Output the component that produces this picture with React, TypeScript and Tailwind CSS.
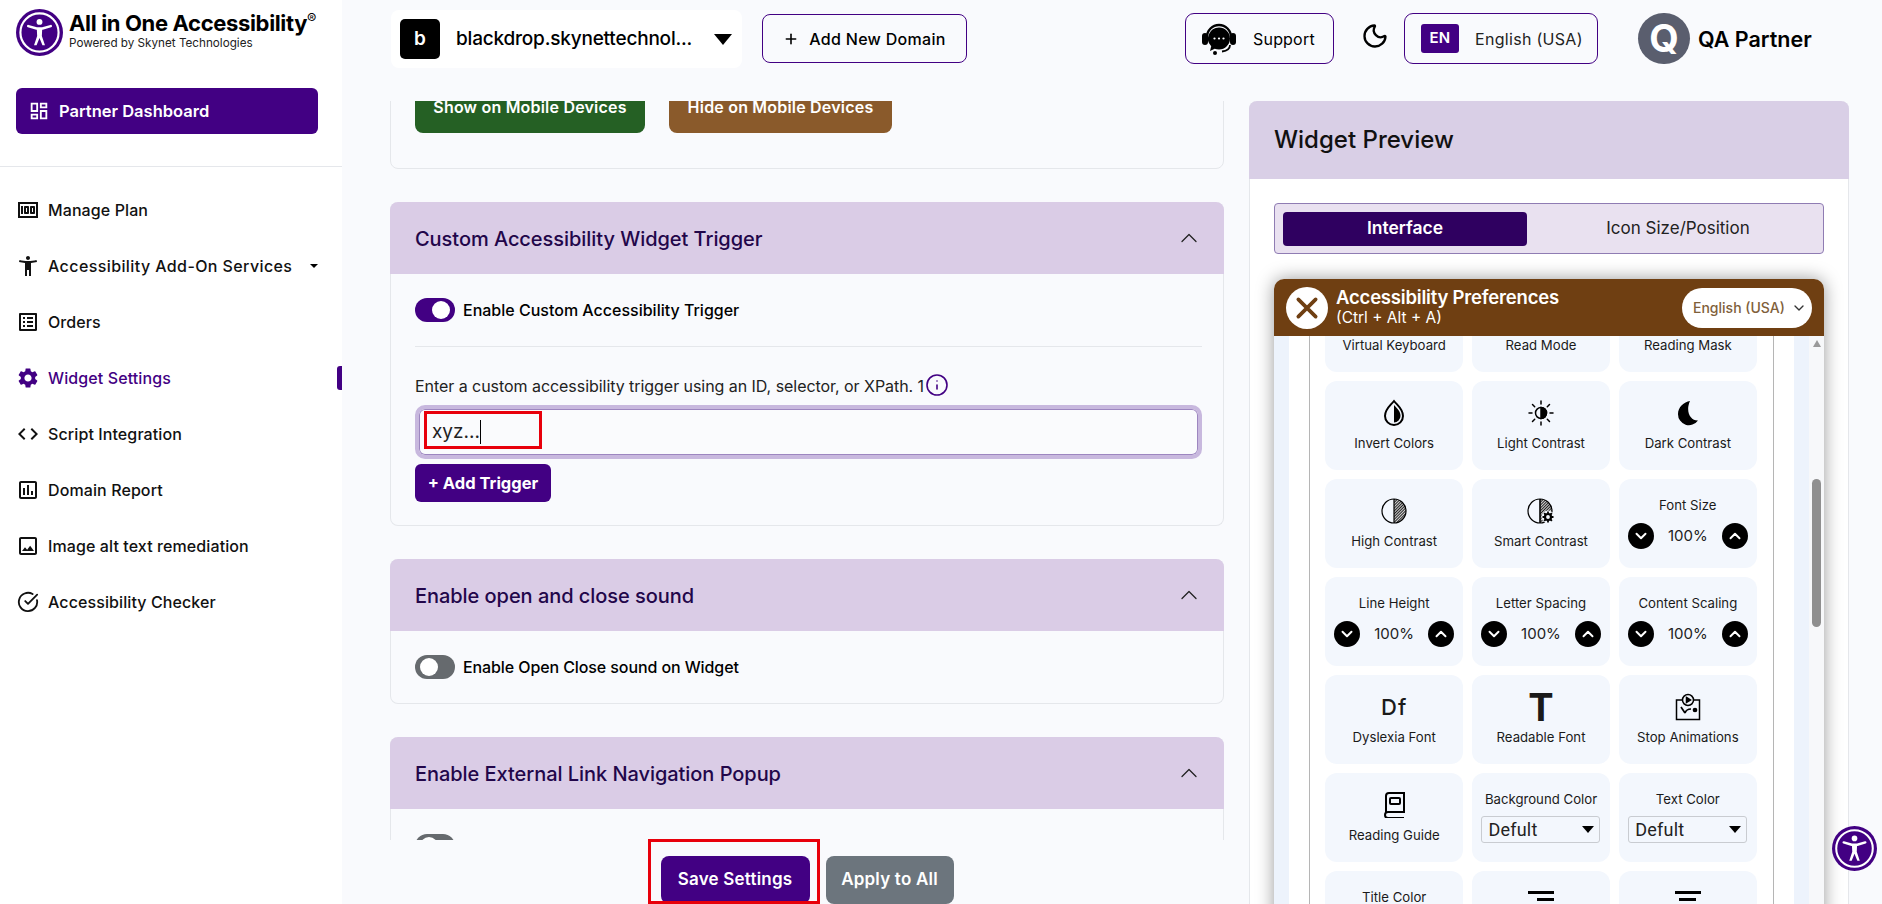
import type { ReactNode } from 'react';
import { ChevronDown, ChevronUp, Info, Moon, Plus } from 'lucide-react';
import {
  MdAccessibilityNew,
  MdCode,
  MdOutlineAssessment,
  MdOutlineDashboard,
  MdOutlineImage,
  MdOutlineListAlt,
  MdOutlineMoney,
  MdSettings,
} from 'react-icons/md';
import { LuCircleCheckBig } from 'react-icons/lu';

const navItems = [
  { label: 'Manage Plan', icon: <MdOutlineMoney className="h-6 w-6" /> },
  { label: 'Accessibility Add-On Services', icon: <MdAccessibilityNew className="h-6 w-6" />, caret: true },
  { label: 'Orders', icon: <MdOutlineListAlt className="h-6 w-6" /> },
  { label: 'Widget Settings', icon: <MdSettings className="h-6 w-6" />, active: true },
  { label: 'Script Integration', icon: <MdCode className="h-6 w-6" /> },
  { label: 'Domain Report', icon: <MdOutlineAssessment className="h-6 w-6" /> },
  { label: 'Image alt text remediation', icon: <MdOutlineImage className="h-6 w-6" /> },
  { label: 'Accessibility Checker', icon: <LuCircleCheckBig className="h-[22px] w-[22px]" /> },
];

function AccessLogo({ className }: { className: string }) {
  return (
    <svg viewBox="0 0 48 48" className={className}>
      <circle cx="24" cy="24" r="24" fill="#420083" />
      <circle cx="24" cy="24" r="19.5" fill="#420083" stroke="#fff" strokeWidth="2.2" />
      <circle cx="24" cy="13.2" r="3" fill="#fff" />
      <path d="M12.5 17.5 L21 20 H27 L35.5 17.5" fill="none" stroke="#fff" strokeWidth="2.6" strokeLinecap="round" strokeLinejoin="round" />
      <path d="M21.2 19.5 H26.8 L26.4 27.5 L29.6 37 H27 L24 29.5 L21 37 H18.4 L21.6 27.5 Z" fill="#fff" />
    </svg>
  );
}

function SupportIcon() {
  return (
    <svg viewBox="0 0 36 36" className="h-9 w-9">
      <path d="M6 16a12 12 0 0 1 24 0" fill="none" stroke="#000" strokeWidth="2.4" />
      <rect x="1" y="12" width="6" height="12" rx="3" fill="#000" />
      <rect x="29" y="12" width="6" height="12" rx="3" fill="#000" />
      <path d="M18 6.5a11 11 0 0 1 0 22c-1.5 0-3-.3-4.300-.8L9 30l1.200-4.800A11 11 0 0 1 18 6.500Z" fill="#000" />
      <circle cx="13.500" cy="17.500" r="1.100" fill="#fff" />
      <circle cx="18" cy="17.500" r="1.100" fill="#fff" />
      <circle cx="22.500" cy="17.500" r="1.100" fill="#fff" />
      <path d="M29 24c0 4-4 6-8 6.500" fill="none" stroke="#000" strokeWidth="1.800" />
      <circle cx="14" cy="32" r="2" fill="#000" />
    </svg>
  );
}

function InvertIcon() {
  return (
    <svg viewBox="0 0 26 28" className="h-7 w-[26px]">
      <path d="M13 2C9 7 4 10 4 17a9 9 0 0 0 18 0C22 10 17 7 13 2Z" fill="none" stroke="#000" strokeWidth="2" />
      <path d="M13 6C16 9.500 19.500 12 19.500 17A6.500 6.500 0 0 1 13 23.500Z" fill="#000" />
    </svg>
  );
}

function LightContrastIcon() {
  return (
    <svg viewBox="0 0 26 26" className="h-[26px] w-[26px]" stroke="#000" strokeWidth="1.500" strokeLinecap="round">
      <circle cx="13" cy="13" r="5.500" fill="none" />
      <path d="M13 7.500a5.500 5.500 0 0 1 0 11Z" fill="#000" />
      <path d="M13 1v3M13 22v3M1 13h3M22 13h3M4.500 4.500l2.200 2.200M19.300 19.300l2.200 2.200M4.500 21.500l2.200-2.200M19.300 6.700l2.200-2.200" />
    </svg>
  );
}

function DarkContrastIcon() {
  return (
    <svg viewBox="0 0 26 28" className="h-7 w-[26px]">
      <path d="M15 2C9 3 3 8 3 15a11 11 0 0 0 20 6.500C16 22 10 13 15 2Z" fill="#000" />
    </svg>
  );
}

function HatchDefs({ id }: { id: string }) {
  return (
    <defs>
      <pattern id={id} width="2" height="2" patternUnits="userSpaceOnUse" patternTransform="rotate(45)">
        <rect width="2" height="2" fill="#fff" />
        <rect width="1.200" height="2" fill="#222" />
      </pattern>
    </defs>
  );
}

function HighContrastIcon() {
  return (
    <svg viewBox="0 0 26 26" className="h-[26px] w-[26px]">
      <HatchDefs id="hatch-a" />
      <path d="M13 1a12 12 0 0 1 0 24Z" fill="url(#hatch-a)" />
      <circle cx="13" cy="13" r="12" fill="none" stroke="#000" strokeWidth="1.200" />
      <path d="M13 1v24" stroke="#000" strokeWidth="1.200" />
    </svg>
  );
}

function SmartContrastIcon() {
  return (
    <svg viewBox="0 0 28 26" className="h-[26px] w-7">
      <HatchDefs id="hatch-b" />
      <path d="M13 1a12 12 0 0 1 0 24Z" fill="url(#hatch-b)" />
      <circle cx="13" cy="13" r="12" fill="none" stroke="#000" strokeWidth="1.200" />
      <path d="M13 1v24" stroke="#000" strokeWidth="1.600" />
      <circle cx="21" cy="19" r="6.500" fill="#f3f7fd" />
      <circle cx="21" cy="19" r="3" fill="none" stroke="#000" strokeWidth="2.200" />
      <path d="M21 13.500v2M21 22.500v2M15.500 19h2M24.500 19h2M17.100 15.100l1.400 1.400M23.500 21.500l1.400 1.400M17.100 22.900l1.400-1.400M23.500 16.500l1.400-1.400" stroke="#000" strokeWidth="1.800" />
    </svg>
  );
}

function StopAnimationsIcon() {
  return (
    <svg viewBox="0 0 26 28" className="h-7 w-[26px]" fill="none" stroke="#000" strokeWidth="1.500">
      <path d="M8 7H1.500v19.500h23V7H18" />
      <circle cx="13" cy="7" r="5.500" fill="#f3f7fd" />
      <path d="M11.500 4.500l4 2.500-4 2.500Z" fill="#000" />
      <path d="M6 14l4 6M10 20c1-3 3-4 6-4" strokeWidth="1.700" />
      <circle cx="20" cy="17" r="1.600" fill="#000" />
    </svg>
  );
}

function ReadingGuideIcon() {
  return (
    <svg viewBox="0 0 24 26" className="h-[26px] w-6" fill="none" stroke="#000" strokeWidth="2">
      <path d="M4 21V4a3 3 0 0 1 3-3h15v19H6a3 3 0 0 0 0 6h16" />
      <rect x="8" y="6" width="10" height="6" rx="1" />
    </svg>
  );
}

function Toggle({ on }: { on?: boolean }) {
  return (
    <span className={`flex h-6 w-10 shrink-0 items-center rounded-full px-[5px] ${on ? 'justify-end bg-[#420083]' : 'justify-start bg-[#666a6e]'}`}>
      <span className="h-[18px] w-[18px] rounded-full bg-white" />
    </span>
  );
}

function SectionHeader({ title }: { title: string }) {
  return (
    <div className="-mx-px flex h-[72px] shrink-0 items-center justify-between rounded-t-[8px] bg-[#dacce6] pl-[25px] pr-[21px]">
      <h2 className="mt-[2px] text-[20px] font-medium tracking-[-0.05px] text-[#22064a]">{title}</h2>
      <ChevronUp className="h-7 w-7 text-[#222]" strokeWidth={1.100} />
    </div>
  );
}

function Tile({ label, icon, height, children }: { label?: string; icon?: ReactNode; height?: string; children?: ReactNode }) {
  return (
    <div className={`flex flex-col items-center rounded-[12px] bg-[#f3f7fd] text-[13.200px] leading-[20px] text-[#1a1a1a] ${height ?? 'h-[89px]'}`}>
      {icon ? <div className="mt-[18px] flex h-7 items-center justify-center">{icon}</div> : null}
      {label ? <div className={icon ? 'mt-[6px]' : 'mt-[16px]'}>{label}</div> : null}
      {children}
    </div>
  );
}

function Stepper({ label }: { label: string }) {
  return (
    <Tile label={label}>
      <div className="mt-[8px] flex w-[120px] items-center justify-between">
        <span className="flex h-[26px] w-[26px] items-center justify-center rounded-full bg-black">
          <ChevronDown className="h-[18px] w-[18px] text-white" strokeWidth={2.600} />
        </span>
        <span className="text-[15px] text-[#222]">100%</span>
        <span className="flex h-[26px] w-[26px] items-center justify-center rounded-full bg-black">
          <ChevronUp className="h-[18px] w-[18px] text-white" strokeWidth={2.600} />
        </span>
      </div>
    </Tile>
  );
}

function ColorSelect({ label }: { label: string }) {
  return (
    <Tile label={label}>
      <div className="mt-[7px] flex h-[27px] w-[119px] items-center justify-between rounded-[3px] border border-[#c9ccd1] bg-[#f3f7fd] pl-[6px] pr-[5px] font-[family-name:'Roboto',sans-serif] text-[18px] tracking-[0.2px] text-[#222]">
        <span>Defult</span>
        <span className="h-0 w-0 border-x-[6px] border-t-[7px] border-x-transparent border-t-black" />
      </div>
    </Tile>
  );
}

function AlignBars({ center }: { center?: boolean }) {
  return (
    <div className={`flex w-[26px] flex-col gap-[4px] ${center ? 'items-center' : 'items-end'}`}>
      <span className="h-[3px] w-[26px] bg-black" />
      <span className="h-[3px] w-[17px] bg-black" />
      <span className="h-[3px] w-[26px] bg-black" />
      <span className="h-[3px] w-[17px] bg-black" />
    </div>
  );
}

export default function App() {
  return (
    <div className="flex h-screen w-screen overflow-hidden bg-[#f9fafd] font-[family-name:'Inter',sans-serif] text-black">
      <aside className="flex w-[342px] shrink-0 flex-col bg-white">
        <div className="flex items-start pl-4 pt-[9px]">
          <AccessLogo className="h-[47px] w-[47px] shrink-0" />
          <div className="ml-[6px] mt-[2px]">
            <div className="whitespace-nowrap text-[22px] font-bold leading-[25px] tracking-[-0.35px]">
              All in One Accessibility<sup className="text-[14px] font-normal">®</sup>
            </div>
            <div className="text-[11.700px] leading-[14px] text-[#222]">Powered by Skynet Technologies</div>
          </div>
        </div>
        <div className="ml-4 mt-[32px] flex h-[46px] w-[302px] items-center gap-[9px] rounded-[6px] bg-[#420083] pl-[12px] text-[16.500px] font-semibold text-white">
          <MdOutlineDashboard className="h-[22px] w-[22px]" />
          Partner Dashboard
        </div>
        <div className="mt-[32px] h-px bg-[#e5e7eb]" />
        <nav className="mt-[15px]">
          {navItems.map((item) => (
            <div
              key={item.label}
              className={`relative flex h-[56px] items-center pl-4 text-[16px] font-medium ${item.active ? 'text-[#420083]' : 'text-[#111]'} ${item.caret ? 'tracking-[0.4px]' : 'tracking-[0.1px]'}`}
            >
              <span className="flex w-6 justify-center">{item.icon}</span>
              <span className="ml-2 whitespace-nowrap">{item.label}</span>
              {item.caret ? <span className="ml-auto mr-[24px] h-0 w-0 border-x-[4px] border-t-[4px] border-x-transparent border-t-black" /> : null}
              {item.active ? <span className="absolute right-0 top-[16px] h-6 w-[5px] rounded-l-[3px] bg-[#420083]" /> : null}
            </div>
          ))}
        </nav>
      </aside>

      <div className="flex min-w-0 flex-1 flex-col">
        <header className="flex h-[101px] shrink-0 items-start pl-[49px]">
          <div className="mt-[10px] flex h-[58px] w-[351px] items-center rounded-[8px] bg-white pl-[9px]">
            <span className="flex h-10 w-10 items-center justify-center rounded-[5px] bg-black text-[19px] font-semibold text-white">b</span>
            <span className="ml-[16px] w-[254px] whitespace-nowrap text-[19px] font-medium tracking-[-0.2px]">blackdrop.skynettechnol...</span>
            <span className="ml-[4px] h-0 w-0 border-x-[9px] border-t-[11px] border-x-transparent border-t-black" />
          </div>
          <div className="ml-[20px] mt-[14px] flex h-[49px] w-[205px] items-center justify-center gap-[10px] rounded-[8px] border border-[#420083] text-[16px] font-medium tracking-[0.3px]">
            <Plus className="h-4 w-4" strokeWidth={2.400} />
            Add New Domain
          </div>
          <div className="ml-[218px] mt-[13px] flex h-[51px] w-[149px] items-center gap-[16px] rounded-[9px] border border-[#420083] pl-[15px] text-[16px] tracking-[0.2px]">
            <SupportIcon />
            Support
          </div>
          <Moon className="ml-[27px] mt-[22px] h-7 w-7" strokeWidth={2} />
          <div className="ml-[15px] mt-[13px] flex h-[51px] w-[194px] items-center gap-[16px] rounded-[9px] border border-[#420083] pl-[16px] text-[16px] tracking-[0.3px] text-[#222]">
            <span className="flex h-[29px] w-[38px] items-center justify-center rounded-[3px] bg-[#420083] text-[15px] font-semibold text-white">EN</span>
            English (USA)
          </div>
          <div className="ml-[40px] mt-[13px] flex h-[51px] w-[52px] items-center justify-center rounded-full bg-[#5a5e6e] text-[38px] font-bold text-white">Q</div>
          <div className="ml-[8px] mt-[26px] whitespace-nowrap text-[21.500px] font-semibold leading-[26px]">QA Partner</div>
        </header>

        <div className="flex min-h-0 flex-1 gap-[25px] pl-[48px] pr-[33px]">
          <main className="flex w-[834px] shrink-0 flex-col">
            <div className="flex h-[739px] shrink-0 flex-col gap-[33px] overflow-hidden">
              <section className="-mt-[40px] flex h-[108px] shrink-0 gap-[24px] rounded-b-[8px] border border-[#e5e7eb] px-[24px] pt-[19px]">
                <div className="flex h-[52px] w-[230px] items-center justify-center rounded-[8px] bg-[#256024] text-[16px] font-semibold leading-[14px] tracking-[0.2px] text-white">Show on Mobile Devices</div>
                <div className="flex h-[52px] w-[223px] items-center justify-center rounded-[8px] bg-[#8a5a2b] text-[16px] font-semibold leading-[14px] tracking-[0.2px] text-white">Hide on Mobile Devices</div>
              </section>

              <section className="flex h-[324px] shrink-0 flex-col rounded-[8px] border-x border-b border-[#e5e7eb]">
                <SectionHeader title="Custom Accessibility Widget Trigger" />
                <div className="flex flex-1 flex-col pl-[24px] pr-[21px]">
                  <div className="mt-[24px] flex items-center gap-2">
                    <Toggle on />
                    <span className="text-[16px] font-medium">Enable Custom Accessibility Trigger</span>
                  </div>
                  <div className="mt-[24px] h-px bg-[#e5e7eb]" />
                  <div className="mt-[27px] flex items-center gap-[1px] text-[16px] leading-[24px] tracking-[-0.05px] text-[#222]">
                    Enter a custom accessibility trigger using an ID, selector, or XPath. 1
                    <Info className="-mt-[3px] h-6 w-6 text-[#420083]" strokeWidth={1.600} />
                  </div>
                  <div className="relative mt-[7px] flex h-[54px] items-center rounded-[10px] border-[4px] border-[#c8b8de] bg-[#fafbfd] pl-[13px] shadow-[inset_0_0_0_1px_#9d86c0]">
                    <div className="flex h-[40px] items-center rounded-[6px] text-[19px] text-[#222]">
                      xyz...
                      <span className="h-[24px] w-px bg-black" />
                    </div>
                    <span className="absolute left-[5px] top-[2px] h-[38px] w-[118px] border-[3px] border-[#e8000b]" />
                  </div>
                  <div className="mt-[5px] flex h-[38px] w-[136px] items-center justify-center rounded-[6px] bg-[#420083] text-[16.500px] font-bold text-white">+ Add Trigger</div>
                </div>
              </section>

              <section className="flex h-[145px] shrink-0 flex-col rounded-[8px] border-x border-b border-[#e5e7eb]">
                <SectionHeader title="Enable open and close sound" />
                <div className="mt-[24px] flex items-center gap-2 px-[24px]">
                  <Toggle />
                  <span className="text-[16px] font-medium tracking-[-0.1px]">Enable Open Close sound on Widget</span>
                </div>
              </section>

              <section className="flex h-[145px] shrink-0 flex-col rounded-[8px] border-x border-b border-[#e5e7eb]">
                <SectionHeader title="Enable External Link Navigation Popup" />
                <div className="mt-[25px] flex items-center gap-2 px-[24px]">
                  <Toggle />
                  <span className="text-[16px] font-medium tracking-[-0.1px]">Enable External Link Popup</span>
                </div>
              </section>
            </div>

            <div className="flex flex-1 justify-center gap-[16px] pt-[16px]">
              <div className="relative">
                <div className="flex h-[48px] w-[149px] items-center justify-center rounded-[8px] bg-[#420083] text-[17px] font-semibold tracking-[0.2px] text-white">Save Settings</div>
                <span className="absolute -left-[13px] -right-[10px] -top-[17px] bottom-0 border-[3px] border-[#e8000b]" />
              </div>
              <div className="flex h-[48px] w-[128px] items-center justify-center rounded-[8px] bg-[#6c757d] text-[17px] font-semibold tracking-[0.2px] text-white">Apply to All</div>
            </div>
          </main>

          <section className="flex w-[600px] shrink-0 flex-col rounded-t-[8px] border-x border-[#e5e7eb] bg-white">
            <div className="-mx-px flex h-[78px] shrink-0 items-center rounded-t-[8px] bg-[#d9cfe6] pl-[25px] text-[24px] font-medium text-[#111]">Widget Preview</div>
            <div className="flex flex-col px-[24px] pt-[24px]">
              <div className="flex h-[51px] items-center rounded-[4px] border border-[#8f7cb3] bg-[#e9e1f0] pl-[8px]">
                <div className="flex h-[34px] w-[244px] items-center justify-center rounded-[4px] bg-[#2f0060] text-[17.500px] font-semibold text-white">Interface</div>
                <div className="flex-1 pl-[6px] text-center text-[17px] text-[#222]">Icon Size/Position</div>
              </div>
              <div className="mt-[25px] overflow-hidden rounded-t-[10px] shadow-[0_0_18px_rgba(0,0,0,0.4)]">
                <div className="flex h-[57px] items-center bg-[#6f3f12] pl-[12px] pr-[12px] text-white">
                  <span className="flex h-[42px] w-[42px] items-center justify-center rounded-full bg-white">
                    <svg viewBox="0 0 24 24" className="h-[26px] w-[26px]" stroke="#6f3f12" strokeWidth="3.400" strokeLinecap="round">
                      <path d="M4 4l16 16M20 4L4 20" />
                    </svg>
                  </span>
                  <div className="-mt-[2px] ml-[8px] flex-1">
                    <div className="text-[18.500px] font-semibold leading-[22px] tracking-[-0.2px]">Accessibility Preferences</div>
                    <div className="text-[15.500px] leading-[20px]">(Ctrl + Alt + A)</div>
                  </div>
                  <div className="flex h-[40px] w-[130px] items-center justify-between rounded-full bg-white pl-[11px] pr-[5px] text-[14px] font-medium text-[#80603a]">
                    English (USA)
                    <ChevronDown className="h-4 w-4 text-[#333]" strokeWidth={2} />
                  </div>
                </div>
                <div className="flex h-[600px] bg-[#edf3fc]">
                  <div className="ml-[15px] flex w-[505px] justify-center bg-white">
                    <div className="h-full w-[465px] overflow-hidden border-x border-[#b5b5b5]">
                      <div className="-mt-[53px] grid grid-cols-3 gap-x-[8.500px] gap-y-[9px] pl-[15px] pr-[16px]">
                        <Tile height="h-[89px]"><div className="mt-[52px]">Virtual Keyboard</div></Tile>
                        <Tile height="h-[89px]"><div className="mt-[52px]">Read Mode</div></Tile>
                        <Tile height="h-[89px]"><div className="mt-[52px]">Reading Mask</div></Tile>
                        <Tile label="Invert Colors" icon={<InvertIcon />} />
                        <Tile label="Light Contrast" icon={<LightContrastIcon />} />
                        <Tile label="Dark Contrast" icon={<DarkContrastIcon />} />
                        <Tile label="High Contrast" icon={<HighContrastIcon />} />
                        <Tile label="Smart Contrast" icon={<SmartContrastIcon />} />
                        <Stepper label="Font Size" />
                        <Stepper label="Line Height" />
                        <Stepper label="Letter Spacing" />
                        <Stepper label="Content Scaling" />
                        <Tile label="Dyslexia Font" icon={<span className="text-[22px] font-medium leading-none tracking-[1px]">Df</span>} />
                        <Tile label="Readable Font" icon={<span className="text-[38px] font-bold leading-none">T</span>} />
                        <Tile label="Stop Animations" icon={<StopAnimationsIcon />} />
                        <Tile label="Reading Guide" icon={<ReadingGuideIcon />} />
                        <ColorSelect label="Background Color" />
                        <ColorSelect label="Text Color" />
                        <Tile label="Title Color" />
                        <Tile icon={<AlignBars />} />
                        <Tile icon={<AlignBars center />} />
                      </div>
                    </div>
                  </div>
                  <div className="ml-[15px] flex w-[15px] flex-col items-center bg-[#f7f8fa] pt-[4px]">
                    <span className="h-0 w-0 border-x-[4px] border-b-[7px] border-x-transparent border-b-[#9a9a9a]" />
                    <span className="mt-[132px] h-[148px] w-[9px] shrink-0 rounded-full bg-[#8f8f8f]" />
                  </div>
                </div>
              </div>
            </div>
          </section>
        </div>
      </div>

      <AccessLogo className="absolute bottom-[33px] right-[5px] h-[45px] w-[45px]" />
    </div>
  );
}
